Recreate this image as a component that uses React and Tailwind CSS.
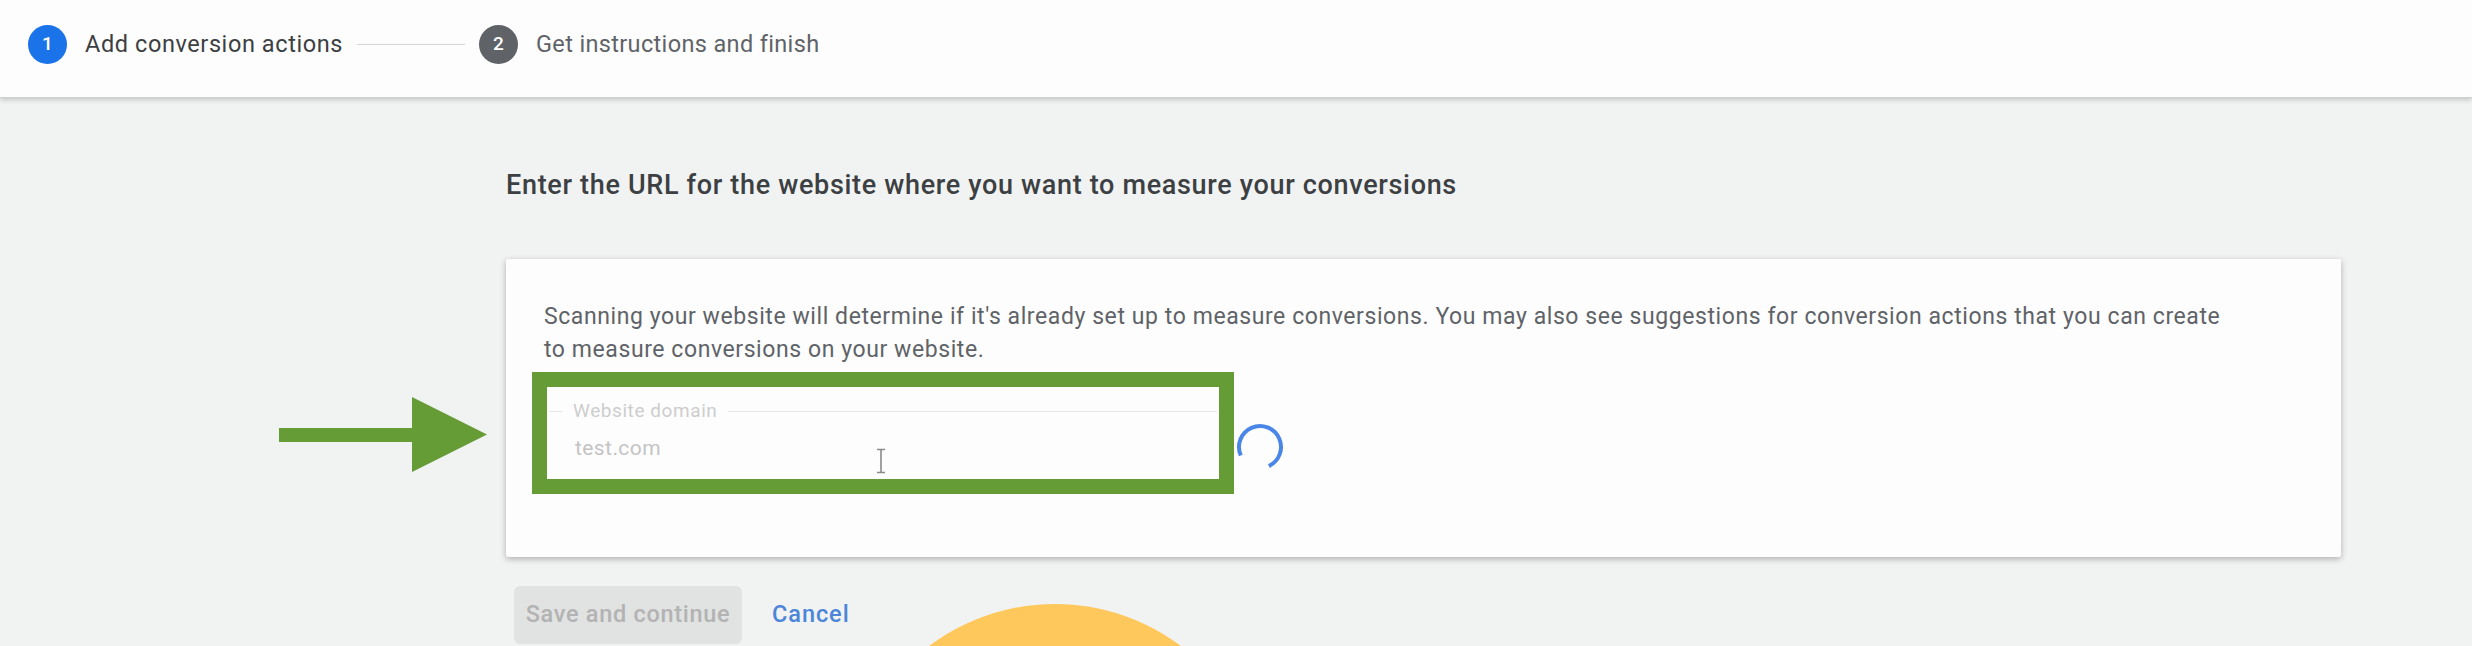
import React from 'react';

const Step = ({ n, label, active }) => (
  <div className="flex items-center">
    <div
      className={`flex h-[39px] w-[39px] items-center justify-center rounded-full text-[19px] font-medium text-white ${
        active ? 'bg-[#1a73e8]' : 'bg-[#5f6368]'
      }`}
    >
      {n}
    </div>
    <span
      className={`ml-[18px] text-[23.5px] ${
        active ? 'tracking-[0.025em] text-[#3c4043]' : 'tracking-[0.015em] text-[#5f6368]'
      }`}
    >
      {label}
    </span>
  </div>
);

const Spinner = () => (
  <svg width="50" height="50" viewBox="0 0 50 50">
    <circle
      cx="25"
      cy="25"
      r="21"
      fill="none"
      stroke="#4a86e8"
      strokeWidth="4"
      strokeDasharray="98 200"
      transform="rotate(156 25 25)"
    />
  </svg>
);

export default function App() {
  return (
    <div className="relative h-[646px] w-full overflow-hidden bg-[#f1f3f2] font-['Roboto',sans-serif]">
      {/* Stepper header */}
      <header className="relative z-10 flex h-[98px] items-center border-b border-[#cfcfcf] bg-[#fdfdfd] pb-[8px] pl-[28px] shadow-[0_2px_5px_rgba(0,0,0,0.18)]">
        <Step n="1" label="Add conversion actions" active />
        <div className="mx-[14px] h-px w-[108px] bg-[#d6d6d6]" />
        <Step n="2" label="Get instructions and finish" />
      </header>

      <main className="pl-[506px] pr-[131px]">
        <h1 className="mt-[69px] text-[27px] leading-[36px] font-medium tracking-[0.025em] text-[#3c4043]">
          Enter the URL for the website where you want to measure your conversions
        </h1>

        <div className="mt-[56px] rounded-[2px] bg-[#fdfdfd] px-[38px] pt-[41px] pb-[63px] shadow-[0_2px_6px_rgba(0,0,0,0.28)]">
          <p className="max-w-[1700px] text-[23px] leading-[33px] tracking-[0.025em] text-[#5f6368]">
            Scanning your website will determine if it's already set up to measure conversions. You may also see
            suggestions for conversion actions that you can create to measure conversions on your website.
          </p>

          <div className="mt-[6px] -ml-[12px] flex items-center">
            {/* highlighted input */}
            <div className="relative h-[122px] w-[702px] border-[15px] border-[#669c35] bg-[#fdfdfd]">
              <div className="mt-[14px] flex h-[20px] items-center pl-[2px] pr-[2px]">
                <div className="h-px w-[13px] bg-[#e6e6e6]" />
                <span className="px-[11px] text-[19px] leading-[20px] tracking-[0.03em] text-[#cdcdcd]">
                  Website domain
                </span>
                <div className="h-px flex-1 bg-[#e6e6e6]" />
              </div>
              <div className="mt-[15px] pl-[28px] text-[21px] leading-[24px] tracking-[0.02em] text-[#c4c4c4]">
                test.com
              </div>
              <svg className="absolute left-[328px] top-[61px]" width="12" height="26" viewBox="0 0 12 26">
                <path d="M2 1.5h8M6 1.5v23M2 24.5h8" stroke="#8a8a8a" strokeWidth="1.6" fill="none" />
              </svg>
            </div>
            <div className="mt-[28px] ml-[1px]">
              <Spinner />
            </div>
          </div>
        </div>

        <div className="mt-[29px] flex items-center">
          <button className="ml-[8px] h-[58px] w-[228px] rounded-[6px] bg-[#e1e2e2] text-[23.5px] font-medium tracking-[0.03em] text-[#b3b3b3]">
            Save and continue
          </button>
          <button className="ml-[30px] text-[23.5px] font-medium tracking-[0.04em] text-[#4c86d9]">Cancel</button>
        </div>
      </main>

      {/* annotation arrow */}
      <svg className="absolute left-[279px] top-[397px]" width="208" height="75" viewBox="0 0 208 75">
        <path d="M0 31h133V0l75 37.5L133 75V45H0z" fill="#669c35" />
      </svg>

      {/* click highlight */}
      <div className="absolute left-[845px] top-[604px] h-[420px] w-[420px] rounded-full bg-[#fec85c]" />
    </div>
  );
}
